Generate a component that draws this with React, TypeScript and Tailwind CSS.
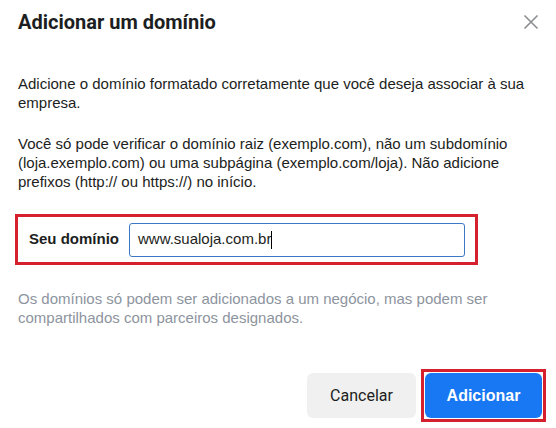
import React from "react";

const sans = "font-['Liberation_Sans',Arial,sans-serif]";

export default function App() {
  return (
    <div className={`w-[556px] h-[428px] bg-white flex flex-col ${sans} text-[#1c1e21]`}>
      {/* Header */}
      <div className="h-[44px] flex items-center justify-between pl-[18px] pr-[16px]">
        <h2 className="font-['Roboto',sans-serif] font-bold text-[20px] text-[#1c1e21]">
          Adicionar um domínio
        </h2>
        <button className="w-[18px] h-[18px] flex items-center justify-center text-[#8a8d91]">
          <svg width="16" height="16" viewBox="0 0 16 16" fill="none" stroke="currentColor" strokeWidth="1.6">
            <path d="M1.5 1.5l13 13M14.5 1.5l-13 13" />
          </svg>
        </button>
      </div>

      {/* Body */}
      <div className="px-[18px] pt-[30px] text-[15px] leading-[19px]">
        <p>Adicione o domínio formatado corretamente que você deseja associar à sua empresa.</p>
        <p className="mt-[22px]">
          Você só pode verificar o domínio raiz (exemplo.com), não um subdomínio (loja.exemplo.com) ou uma
          subpágina (exemplo.com/loja). Não adicione prefixos (http:// ou https://) no início.
        </p>
      </div>

      {/* Field */}
      <div className="ml-[15px] mt-[23px] w-[463px] h-[51px] border-[3px] border-[#d5202e] flex items-center pl-[11px] pr-[10px] gap-[10px]">
        <label className="font-bold text-[15px] whitespace-nowrap">Seu domínio</label>
        <div className="flex-1 h-[34px] border border-[#3b78c6] rounded-[3px] flex items-center px-[8px] text-[15px]">
          www.sualoja.com.br<span className="w-px h-[18px] bg-black" />
        </div>
      </div>

      <p className="px-[18px] mt-[24px] text-[15px] leading-[19px] text-[#8d949e] pr-[60px]">
        Os domínios só podem ser adicionados a um negócio, mas podem ser compartilhados com parceiros designados.
      </p>

      {/* Footer */}
      <div className="mt-auto mb-[6px] flex justify-end items-center gap-[5px] pr-[10px]">
        <button className="w-[109px] h-[45px] rounded-[6px] bg-[#f0f0f0] font-['Roboto',sans-serif] text-[16px] text-[#1c1e21]">
          Cancelar
        </button>
        <div className="border-[3px] border-[#d5202e] p-[1px]">
          <button className="w-[117px] h-[45px] rounded-[6px] bg-[#1877f2] text-white font-bold text-[16px]">
            Adicionar
          </button>
        </div>
      </div>
    </div>
  );
}
